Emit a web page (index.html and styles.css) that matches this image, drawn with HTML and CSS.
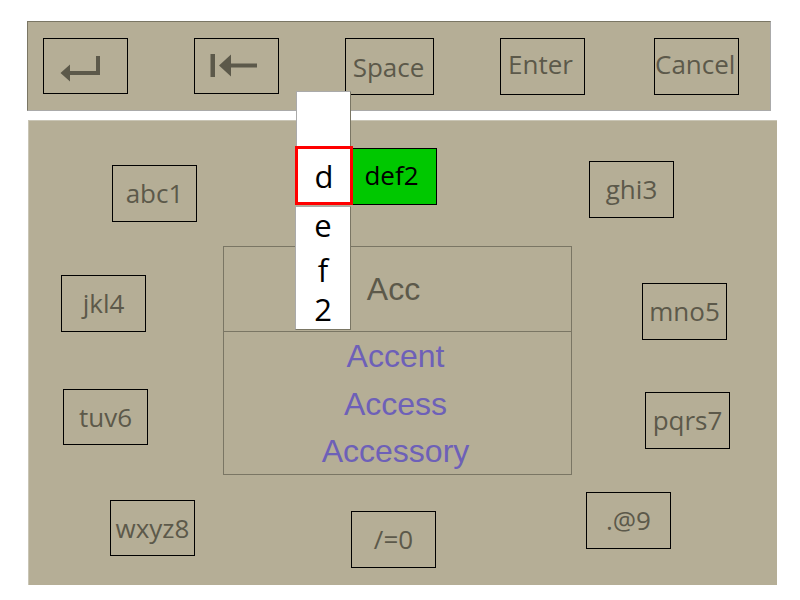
FILE: index.html
```html
<!DOCTYPE html>
<html lang="en">
<head>
<meta charset="utf-8">
<title>Keypad text entry</title>
<link rel="stylesheet" href="styles.css">
</head>
<body>
<header class="toolbar">
  <button class="key key--short" type="button" aria-label="New line">
    <svg class="icon" viewBox="0 0 83 55" aria-hidden="true"><path d="M16.5 34 26 25.500v6.500h26V17h4v19H26v6.500z"/></svg>
  </button>
  <button class="key key--short" type="button" aria-label="Back to start">
    <svg class="icon" viewBox="0 0 83 55" aria-hidden="true"><path d="M15.5 15H20v23h-4.500zM24 26.500l12-11v9h26v4H36v9z"/></svg>
  </button>
  <button class="key key--wide" type="button">Space</button>
  <button class="key key--command" type="button">Enter</button>
  <button class="key key--command key--last" type="button">Cancel</button>
</header>

<main class="ring">
  <button class="key key--ring key-abc" type="button">abc1</button>
  <button class="key key--ring key-def key--active" type="button">def2</button>
  <button class="key key--ring key-ghi" type="button">ghi3</button>
  <button class="key key--ring key-jkl" type="button">jkl4</button>
  <button class="key key--ring key-mno" type="button">mno5</button>
  <button class="key key--ring key--short key-tuv" type="button">tuv6</button>
  <button class="key key--ring key-pqrs" type="button">pqrs7</button>
  <button class="key key--ring key--short key-wxyz" type="button">wxyz8</button>
  <button class="key key--ring key-zero" type="button">/=0</button>
  <button class="key key--ring key-nine" type="button">.@9</button>

  <section class="entry">
    <output class="typed">Acc</output>
    <div class="suggestions">
      <button class="suggestion" type="button">Accent</button>
      <button class="suggestion" type="button">Access</button>
      <button class="suggestion" type="button">Accessory</button>
    </div>
  </section>

  <div class="picker">
    <div class="picker-blank"></div>
    <button class="letter letter--current" type="button">d</button>
    <div class="picker-rest">
      <button class="letter" type="button">e</button>
      <button class="letter" type="button">f</button>
      <button class="letter" type="button">2</button>
    </div>
  </div>
</main>
</body>
</html>
```
FILE: styles.css
```css
:root {
  --panel: #b5ae96;
  --ink: #5c594a;
  --line: #7a7664;
  --word: #6d60b8;
}

* {
  box-sizing: border-box;
}

body {
  margin: 0;
  padding: 21px 23px 15px 27px;
  background: #fff;
  color: var(--ink);
  font-family: "Open Sans", "Noto Sans", sans-serif;
}

button {
  margin: 0;
  padding: 0;
  border: 0;
  border-radius: 0;
  background: none;
  color: inherit;
  font: inherit;
}

.toolbar {
  display: flex;
  gap: 66px;
  margin-right: 6px;
  padding: 16px 31px 15px 15px;
  border: 1px solid #aaa;
  border-top-color: var(--line);
  border-left-color: var(--line);
  background: var(--panel);
}

.key {
  flex: none;
  width: 85px;
  height: 57px;
  border: 1px solid #000;
  font-size: 26px;
  line-height: 36px;
  text-align: center;
  white-space: nowrap;
}

.key--wide {
  width: 89px;
  padding-right: 2px;
}

.key--command {
  padding: 0 4px 6px 0;
}

.key--last {
  margin-left: auto;
}

.icon {
  display: block;
  width: 100%;
  fill: var(--ink);
}

.ring {
  position: relative;
  display: flow-root;
  margin: 9px 0 0 1px;
  border-top: 1px solid #c9c5b5;
  border-left: 1px solid #c9c5b5;
  background: var(--panel);
}

/* Keys sit on a free ring around the entry box */
.key--ring {
  position: absolute;
  padding-bottom: 2px;
}

.key--short {
  height: 56px;
  padding-bottom: 0;
}

.key--active {
  padding: 0 6px 4px 0;
  background: #00c800;
  color: #000;
}

.key-abc { left: 83px; top: 44px; }
.key-def { left: 323px; top: 27px; }
.key-ghi { right: 103px; top: 40px; }
.key-jkl { left: 32px; top: 154px; }
.key-mno { right: 50px; top: 162px; }
.key-tuv { left: 34px; top: 268px; }
.key-pqrs { right: 47px; top: 271px; }
.key-wxyz { left: 81px; top: 379px; }
.key-zero { left: 322px; top: 390px; }
.key-nine { right: 106px; top: 371px; }

.entry {
  margin: 125px 205px 110px 194px;
  border: 1px solid var(--line);
  font-family: "Liberation Sans", Arial, sans-serif;
  font-size: 32px;
  text-align: center;
}

.typed {
  display: block;
  padding-right: 8px;
  border-bottom: 1px solid var(--line);
  line-height: 84px;
}

.suggestions {
  display: grid;
  grid-template-rows: 48px 48px 46px;
  padding-right: 4px;
  color: var(--word);
}

/* Letter picker opened over the active key */
.picker {
  position: absolute;
  left: 266px;
  top: -30px;
  width: 58px;
  color: #000;
  font-size: 31px;
}

.picker-blank {
  width: 55px;
  height: 55px;
  margin-left: 1px;
  border: 1px solid #aaa;
  border-right-color: var(--line);
  border-bottom: 0;
  background: #fff;
}

.letter {
  display: block;
  width: 100%;
  line-height: 24px;
}

.letter--current {
  height: 59px;
  border: 3px solid #f00;
  background: #fff;
}

.picker-rest {
  display: grid;
  grid-template-rows: 36px 54px 24px;
  width: 56px;
  margin-top: 1px;
  padding-bottom: 8px;
  border: 1px solid #aaa;
  border-right-color: var(--line);
  border-bottom-color: var(--line);
  background: #fff;
}
```
